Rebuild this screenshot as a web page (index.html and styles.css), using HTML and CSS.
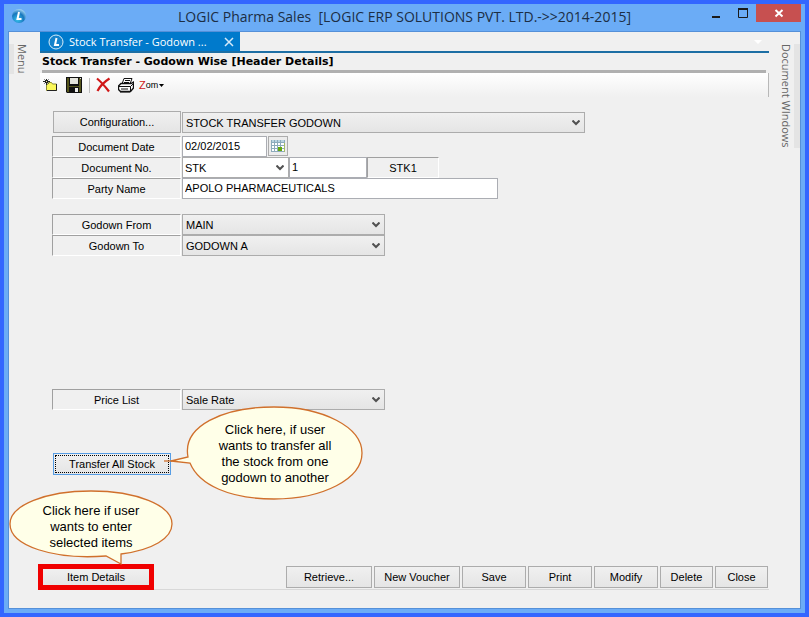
FILE: index.html
```html
<!DOCTYPE html>
<html lang="en">

<head>
    <meta charset="utf-8">
    <meta name="viewport" content="width=device-width, initial-scale=1">
    <title>LOGIC Pharma Sales</title>
    <link rel="stylesheet" href="styles.css">
</head>

<body>
    <div class="window">
        <!-- title bar -->
        <header class="title-bar">
            <svg class="title-bar__logo" width="16" height="16" viewBox="0 0 16 16" aria-hidden="true">
                <defs>
                    <radialGradient id="orb" cx="40%" cy="75%" r="75%">
                        <stop offset="0" stop-color="#35c3ee"/>
                        <stop offset="0.6" stop-color="#1877bd"/>
                        <stop offset="1" stop-color="#9fd2f2"/>
                    </radialGradient>
                </defs>
                <circle cx="8" cy="8" r="7" fill="url(#orb)"/>
                <path d="M8 4L6.5 11H10.5" fill="none" stroke="#fff" stroke-width="2"/>
            </svg>
            <h1 class="title-bar__text">LOGIC Pharma Sales&nbsp; [LOGIC ERP SOLUTIONS PVT. LTD.-&gt;&gt;2014-2015]</h1>
            <div class="title-bar__controls">
                <button class="control" aria-label="Minimize">
                    <svg width="12" height="12" viewBox="0 0 12 12"><path d="M2 9H10V11H2Z" fill="#1a1a1a"/></svg>
                </button>
                <button class="control" aria-label="Maximize">
                    <svg width="12" height="12" viewBox="0 0 12 12"><path d="M1.5 2.5H10.5V10.5H1.5Z" fill="none" stroke="#1a1a1a"/><path d="M1 2H11" stroke="#1a1a1a" stroke-width="2"/></svg>
                </button>
                <button class="control control--close" aria-label="Close window">
                    <svg width="10" height="10" viewBox="0 0 10 10"><path d="M1.5 2L8.5 8.5M8.5 2L1.5 8.5" stroke="#fff" stroke-width="2"/></svg>
                </button>
            </div>
        </header>

        <div class="workspace">
            <!-- left dock -->
            <aside class="dock">
                <button class="dock__tab dock__tab--menu">Menu</button>
            </aside>

            <main class="document">
                <div class="tabs">
                    <div class="tab">
                        <svg width="16" height="16" viewBox="0 0 16 16" aria-hidden="true">
                            <circle cx="8" cy="8" r="7" fill="#1683cc" stroke="#d8edf9"/>
                            <path d="M8.5 4L7 11H11" fill="none" stroke="#fff" stroke-width="2"/>
                        </svg>
                        <span class="tab__title">Stock Transfer - Godown ...</span>
                        <button class="tab__close" aria-label="Close tab">
                            <svg width="10" height="10" viewBox="0 0 10 10"><path d="M1 1L9 9M9 1L1 9" stroke="#d5eafa" stroke-width="1.5"/></svg>
                        </button>
                    </div>
                    <svg class="tabs__more" width="8" height="4" viewBox="0 0 8 4" aria-hidden="true"><path d="M0 0H8L4 4Z" fill="#fff"/></svg>
                </div>
                <h2 class="document__title">Stock Transfer - Godown Wise [Header Details]</h2>

                <!-- toolbar -->
                <div class="toolbar">
                    <button class="tool" aria-label="New">
                        <svg width="16" height="16" viewBox="0 0 16 16">
                            <path d="M4.5 7.5L5.5 5.5H8.5L9.5 7H13.5V13.5H3.5V8Z" fill="#fbf85a" stroke="#8a8a30"/>
                            <path d="M4 13.5H13.5V7" fill="none" stroke="#222"/>
                            <path d="M3.5 2V8M0 4.5H7M1.5 2.5L5.5 6.5M5.5 2.5L1.5 6.5" stroke="#222"/>
                            <path d="M3 4H4V5H3Z" fill="#f6f3a0"/>
                        </svg>
                    </button>
                    <button class="tool" aria-label="Save">
                        <svg width="16" height="16" viewBox="0 0 16 16">
                            <path d="M0 0H16V16H1L0 15Z" fill="#111"/>
                            <path d="M1 1H3V9H13V1H15V15H1Z" fill="#55551c"/>
                            <path d="M3 0H13V8H3Z" fill="#111"/>
                            <path d="M4 1H12V7H4Z" fill="#e4e4dc"/>
                            <path d="M3 10H13V16H3Z" fill="#111"/>
                            <path d="M9 11H12V15H9Z" fill="#eee"/>
                            <path d="M14 1H15V2H14Z" fill="#ddd"/>
                        </svg>
                    </button>
                    <span class="toolbar__separator"></span>
                    <button class="tool" aria-label="Delete record">
                        <svg width="16" height="16" viewBox="0 0 16 16">
                            <path d="M2 1.5C5 4 9 8 14 14.5M14.5 1.5C9 5 5 9 2.5 14" fill="none" stroke="#d01818" stroke-width="2.2"/>
                        </svg>
                    </button>
                    <button class="tool" aria-label="Print record">
                        <svg width="16" height="16" viewBox="0 0 16 16">
                            <path d="M4 7L6 1.5H14L12 7" fill="#fff" stroke="#111"/>
                            <path d="M7 3.5H12M6 5.5H11" stroke="#111"/>
                            <path d="M3 6.5H13L15.5 5V11L12.5 14.5H2.5L.5 12.5V9Z" fill="#fff" stroke="#111" stroke-width="1.4"/>
                            <path d="M1 9.5H12.5V14M12.5 9.5L15 7M3 12H10" fill="none" stroke="#111"/>
                            <path d="M2 14H12V15.5H2Z" fill="#111"/>
                        </svg>
                    </button>
                    <button class="tool tool--zoom">
                        <span class="tool__initial">Z</span><span>om</span>
                        <svg width="5" height="3" viewBox="0 0 5 3" aria-hidden="true"><path d="M0 0H5L2.5 3Z"/></svg>
                    </button>
                </div>

                <!-- header details -->
                <form class="form">
                    <div class="row row--config">
                        <button type="button" class="button button--config" id="configuration">Configuration...</button>
                        <select class="select select--wide" aria-labelledby="configuration">
                            <option>STOCK TRANSFER GODOWN</option>
                        </select>
                    </div>

                    <div class="group">
                        <div class="row">
                            <label class="label" for="date">Document Date</label>
                            <div class="fields fields--spaced">
                                <input class="input input--date" id="date" value="02/02/2015">
                                <button type="button" class="calendar" aria-label="Pick a date">
                                    <svg width="14" height="14" viewBox="0 0 14 14">
                                        <path d="M0 1H14V13H0Z" fill="#fff"/>
                                        <path d="M0 1H14V3H0Z" fill="#b9d3e0"/>
                                        <path d="M.5 1V13M3.5 1V13M6.5 1V13M9.5 1V13M13.5 1V13M0 3.5H14M0 6.5H14M0 9.5H14M0 12.5H14" stroke="#8dabbb"/>
                                        <path d="M7 8H11V12H7Z" fill="#65a80f"/>
                                        <path d="M13 4H14V13H13Z" fill="#a4bd66"/>
                                    </svg>
                                </button>
                            </div>
                        </div>
                        <div class="row">
                            <label class="label" for="series">Document No.</label>
                            <div class="fields">
                                <select class="select select--white select--series" id="series">
                                    <option>STK</option>
                                </select>
                                <input class="input input--number" aria-label="Number" value="1">
                                <output class="label label--code">STK1</output>
                            </div>
                        </div>
                        <div class="row">
                            <label class="label" for="party">Party Name</label>
                            <input class="input input--party" id="party" value="APOLO PHARMACEUTICALS">
                        </div>
                    </div>

                    <div class="group">
                        <div class="row">
                            <label class="label" for="from">Godown From</label>
                            <select class="select" id="from">
                                <option>MAIN</option>
                            </select>
                        </div>
                        <div class="row">
                            <label class="label" for="to">Godown To</label>
                            <select class="select" id="to">
                                <option>GODOWN A</option>
                            </select>
                        </div>
                    </div>

                    <div class="group group--price">
                        <div class="row">
                            <label class="label" for="price">Price List</label>
                            <select class="select" id="price">
                                <option>Sale Rate</option>
                            </select>
                        </div>
                    </div>

                    <div class="transfer">
                        <button type="button" class="button button--focused">Transfer All Stock</button>
                        <div class="callout callout--transfer">
                            <svg class="callout__shape" width="200" height="94" viewBox="0 0 200 94" aria-hidden="true">
                                <path d="M25 51C19 20 60 1 111 1C160 1 199 21 199 47C199 73 160 93 111 93C67 93 36 79 27 57L8 55L25 51Z"/>
                                <path d="M1 55H9"/>
                            </svg>
                            <p class="callout__text">Click here, if user<br>wants to transfer all<br>the stock from one<br>godown to another</p>
                        </div>
                    </div>
                </form>

                <!-- actions -->
                <footer class="actions">
                    <div class="item-details">
                        <button class="button button--marked">Item Details</button>
                        <div class="callout callout--items">
                            <svg class="callout__shape" width="164" height="76" viewBox="0 0 164 76" aria-hidden="true">
                                <path d="M97 66C45 70 1 56 1 34C1 15 37 1 82 1C127 1 163 15 163 34C163 48 144 60 112 64V74Z"/>
                            </svg>
                            <p class="callout__text">Click here if user<br>wants to enter<br>selected items</p>
                        </div>
                    </div>
                    <div class="actions__buttons">
                        <button class="button button--large">Retrieve...</button>
                        <button class="button button--large">New Voucher</button>
                        <button class="button button--medium">Save</button>
                        <button class="button button--medium">Print</button>
                        <button class="button button--medium">Modify</button>
                        <button class="button button--small">Delete</button>
                        <button class="button button--small">Close</button>
                    </div>
                </footer>
            </main>

            <!-- right dock -->
            <aside class="dock dock--right">
                <button class="dock__tab dock__tab--windows">Document WIndows</button>
            </aside>
        </div>
    </div>
</body>

</html>
```

FILE: styles.css
```css
* {
    box-sizing: border-box;
}

body {
    margin: 0;
    font: normal 11px/16px 'Liberation Sans', Arial, sans-serif;
    color: #000000;
}

h1, h2, p {
    margin: 0;
    font-weight: normal;
}

button, input, select {
    margin: 0;
    padding: 0;
    border: none;
    border-radius: 0;
    background: none;
    font: inherit;
    color: inherit;
}

svg {
    display: block;
    flex: none;
}

/* ============ */
/* Window frame */
/* ============ */
.window {
    display: flex;
    flex-direction: column;
    min-height: 100vh;
    border: solid 4px #3366ff;
    background-color: #6bacf6;
}

.title-bar {
    display: grid;
    grid-template-columns: 1fr auto 1fr;
    height: 27px;
}

.title-bar__logo {
    margin: 4px 0 0 7px;
}

.title-bar__text {
    font: normal 14px/26px 'Open Sans', 'Noto Sans', sans-serif;
    color: #1c2e44;
    white-space: nowrap;
}

.title-bar__controls {
    display: flex;
    justify-content: flex-end;
    margin-right: 4px;
}

.control {
    display: flex;
    align-items: center;
    justify-content: center;
    width: 27px;
    height: 18px;
}

.control--close {
    width: 45px;
    background-color: #c75050;
}

.workspace {
    display: flex;
    flex: 1;
    margin: 0 4px 4px;
    border: solid 1px #5590d8;
    background-color: #f0f0f0;
}

/* ===== */
/* Docks */
/* ===== */
.dock {
    display: flex;
    align-items: flex-start;
    width: 31px;
    padding-top: 12px;
}

.dock--right {
    justify-content: flex-end;
}

.dock__tab {
    writing-mode: vertical-rl;
    font: normal 11px/16px 'Open Sans', 'Noto Sans', sans-serif;
    color: #666666;
    white-space: nowrap;
}

.dock__tab--menu {
    border-left: solid 5px #e4e4e4;
}

.dock__tab--windows {
    border-right: solid 6px #e4e4e4;
}

/* ======== */
/* Document */
/* ======== */
.document {
    display: flex;
    flex: 1;
    flex-direction: column;
    min-width: 0;
}

.tabs {
    display: flex;
    align-items: center;
    justify-content: space-between;
    height: 21px;
    padding-right: 7px;
    border-bottom: solid 2px #1c6ea4;
}

.tab {
    display: flex;
    align-items: center;
    gap: 5px;
    width: 200px;
    height: 19px;
    padding: 0 6px 0 8px;
    background-color: #007acc;
    color: #ffffff;
}

.tab__title {
    flex: 1;
    font: normal 11px/18px 'Open Sans', 'Noto Sans', sans-serif;
    white-space: nowrap;
}

.document__title {
    height: 20px;
    margin: 0 3px 0 2px;
    border-bottom: solid 3px #b0b0b0;
    font: bold 11px/17px 'DejaVu Sans', Verdana, sans-serif;
    white-space: nowrap;
}

.toolbar {
    display: flex;
    align-items: center;
    gap: 7px;
    height: 24px;
    padding-left: 3px;
    border-right: solid 1px #b8b8b8;
    background: linear-gradient(#ffffff, #f0f0f0);
}

.toolbar__separator {
    width: 1px;
    height: 15px;
    margin-right: -2px;
    background-color: #bdbdbd;
}

.tool--zoom {
    display: flex;
    align-items: center;
    margin-left: -2px;
    font-size: 9px;
}

.tool--zoom svg {
    margin-left: 1px;
}

.tool__initial {
    font-size: 11px;
    color: #d01818;
}

/* ==== */
/* Form */
/* ==== */
.form {
    padding: 14px 12px 12px;
}

.row {
    display: grid;
    grid-template-columns: 129px 1fr;
    gap: 1px;
    align-items: start;
    height: 21px;
}

.row--config {
    height: 22px;
    margin-bottom: 3px;
    align-items: end;
}

.group {
    margin-bottom: 15px;
}

.group--price {
    margin: 133px 0 43px;
}

.fields {
    display: flex;
    align-items: flex-start;
}

.fields--spaced {
    gap: 1px;
}

.label {
    height: 21px;
    border: solid 1px;
    border-color: #a0a0a0 #ffffff #ffffff #a0a0a0;
    line-height: 20px;
    text-align: center;
}

.label--code {
    width: 72px;
}

.input,
.select {
    height: 21px;
    border: solid 1px #abadb3;
    background-color: #ffffff;
}

.input {
    padding: 0 2px 1px;
}

.input--date {
    width: 85px;
}

.input--number {
    width: 78px;
}

.input--party {
    width: 100%;
    max-width: 316px;
}

.select {
    appearance: none;
    width: 100%;
    max-width: 203px;
    padding: 0 20px 0 3px;
    border-color: #acacac;
    background: url("data:image/svg+xml,%3Csvg xmlns='http://www.w3.org/2000/svg' width='8' height='6'%3E%3Cpath d='M.5 .5L4 4L7.5 .5' fill='none' stroke='%23505050' stroke-width='2'/%3E%3C/svg%3E") no-repeat right 4px center, linear-gradient(#f0f0f0, #e5e5e5);
}

.select--wide {
    max-width: 403px;
}

.select--series {
    width: 107px;
    padding-left: 2px;
}

.select--white {
    background-color: #ffffff;
    background-image: url("data:image/svg+xml,%3Csvg xmlns='http://www.w3.org/2000/svg' width='8' height='6'%3E%3Cpath d='M.5 .5L4 4L7.5 .5' fill='none' stroke='%23505050' stroke-width='2'/%3E%3C/svg%3E");
}

.calendar {
    display: flex;
    align-items: center;
    justify-content: center;
    width: 20px;
    height: 20px;
    border: solid 1px #acacac;
    background-color: #ececec;
}

.button {
    height: 22px;
    border: solid 1px #acacac;
    background: linear-gradient(#f0f0f0, #e5e5e5);
    text-align: center;
    white-space: nowrap;
}

.button--config {
    margin-left: 1px;
}

.button--focused {
    width: 118px;
    border-color: #569de5;
    outline: dotted 1px #000000;
    outline-offset: -3px;
}

.transfer {
    position: relative;
    padding-left: 1px;
}

/* ======== */
/* Callouts */
/* ======== */
.callout {
    position: absolute;
    font-size: 13px;
    text-align: center;
}

.callout__shape {
    fill: #ffffe8;
    stroke: #d0702c;
    stroke-width: 1.3;
}

.callout__text {
    position: absolute;
    top: 16px;
    right: 0;
    left: 0;
    white-space: nowrap;
}

.callout--transfer {
    top: -47px;
    left: 111px;
}

.callout--transfer .callout__text {
    left: 24px;
}

.callout--items {
    bottom: 24px;
    left: -29px;
}

.callout--items .callout__text {
    top: 13px;
}

/* ======= */
/* Actions */
/* ======= */
.actions {
    display: flex;
    align-items: center;
    justify-content: space-between;
    height: 26px;
    margin: auto 0 18px -2px;
    padding-right: 1px;
    border-bottom: solid 1px #d8d8d8;
}

.actions__buttons {
    display: flex;
    gap: 2px;
}

.item-details {
    position: relative;
}

.button--marked {
    display: block;
    width: 116px;
    height: 26px;
    border: solid 5px #f00000;
}

.button--large {
    width: 86px;
}

.button--medium {
    width: 64px;
}

.button--small {
    width: 53px;
}
```
